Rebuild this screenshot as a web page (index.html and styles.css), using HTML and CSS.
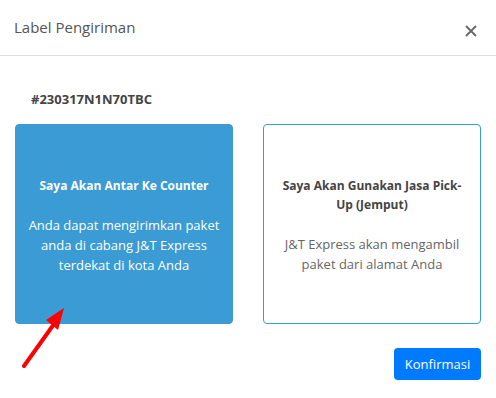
FILE: index.html
```html
<!DOCTYPE html>
<html>
<head>
<meta charset="utf-8">
<link rel="stylesheet" href="styles.css">
</head>
<body>
<div class="modal">
  <div class="modal-header">
    <span class="modal-title">Label Pengiriman</span>
    <svg class="close" width="12" height="12" viewBox="0 0 12 12"><path d="M1 1 L11 11 M11 1 L1 11" stroke="#6b6b6b" stroke-width="2" fill="none"/></svg>
  </div>
  <div class="modal-body">
    <div class="code">#230317N1N70TBC</div>
    <div class="options">
      <div class="option active">
        <div class="opt-title">Saya Akan Antar Ke Counter</div>
        <div class="opt-desc">Anda dapat mengirimkan paket anda di cabang J&amp;T Express terdekat di kota Anda</div>
      </div>
      <div class="option">
        <div class="opt-title">Saya Akan Gunakan Jasa Pick-Up (Jemput)</div>
        <div class="opt-desc">J&amp;T Express akan mengambil paket dari alamat Anda</div>
      </div>
    </div>
  </div>
  <div class="modal-footer">
    <button class="btn">Konfirmasi</button>
  </div>
  <svg class="arrow" width="60" height="80" viewBox="0 0 60 80"><path d="M8 78 L38 36" stroke="#ff0000" stroke-width="4" stroke-linecap="round"/><path d="M48 20 L30 32 L42 42 Z" fill="#ff0000"/></svg>
</div>
</body>
</html>
```
FILE: styles.css
```css
html, body { margin: 0; padding: 0; background: #fff; }
body { font-family: "Open Sans", "Noto Sans", sans-serif; width: 496px; height: 398px; overflow: hidden; }
.modal { position: relative; width: 496px; height: 398px; }
.modal-header { height: 56px; box-sizing: border-box; border-bottom: 1px solid #dedede; display: flex; align-items: center; justify-content: space-between; padding: 0 19px 0 14px; }
.modal-title { font-size: 15px; color: #555; margin-top: -2px; }
.close { margin-top: 6px; }
.modal-body { padding: 34px 15px 0; }
.code { font-size: 13px; font-weight: 700; color: #444; padding-left: 16px; line-height: 18px; }
.options { display: flex; gap: 30px; margin-top: 16px; }
.option { width: 218px; height: 200px; box-sizing: border-box; border: 1px solid #3a9bd5; border-radius: 4px; display: flex; flex-direction: column; justify-content: center; align-items: center; text-align: center; padding: 2px 12px 0; color: #666; }
.option.active { background: #3a9bd5; color: #fff; }
.opt-title { font-size: 12px; font-weight: 700; line-height: 19px; color: #444; }
.option.active .opt-title { color: #fff; }
.opt-desc { font-size: 13px; line-height: 20px; margin-top: 20px; }
.modal-footer { display: flex; justify-content: flex-end; padding: 24px 15px 0; }
.btn { background: #007bff; color: #fff; border: none; border-radius: 4px; width: 87px; height: 32px; font-family: inherit; font-size: 13px; padding: 0; }
.arrow { position: absolute; left: 16px; top: 288px; }
```
